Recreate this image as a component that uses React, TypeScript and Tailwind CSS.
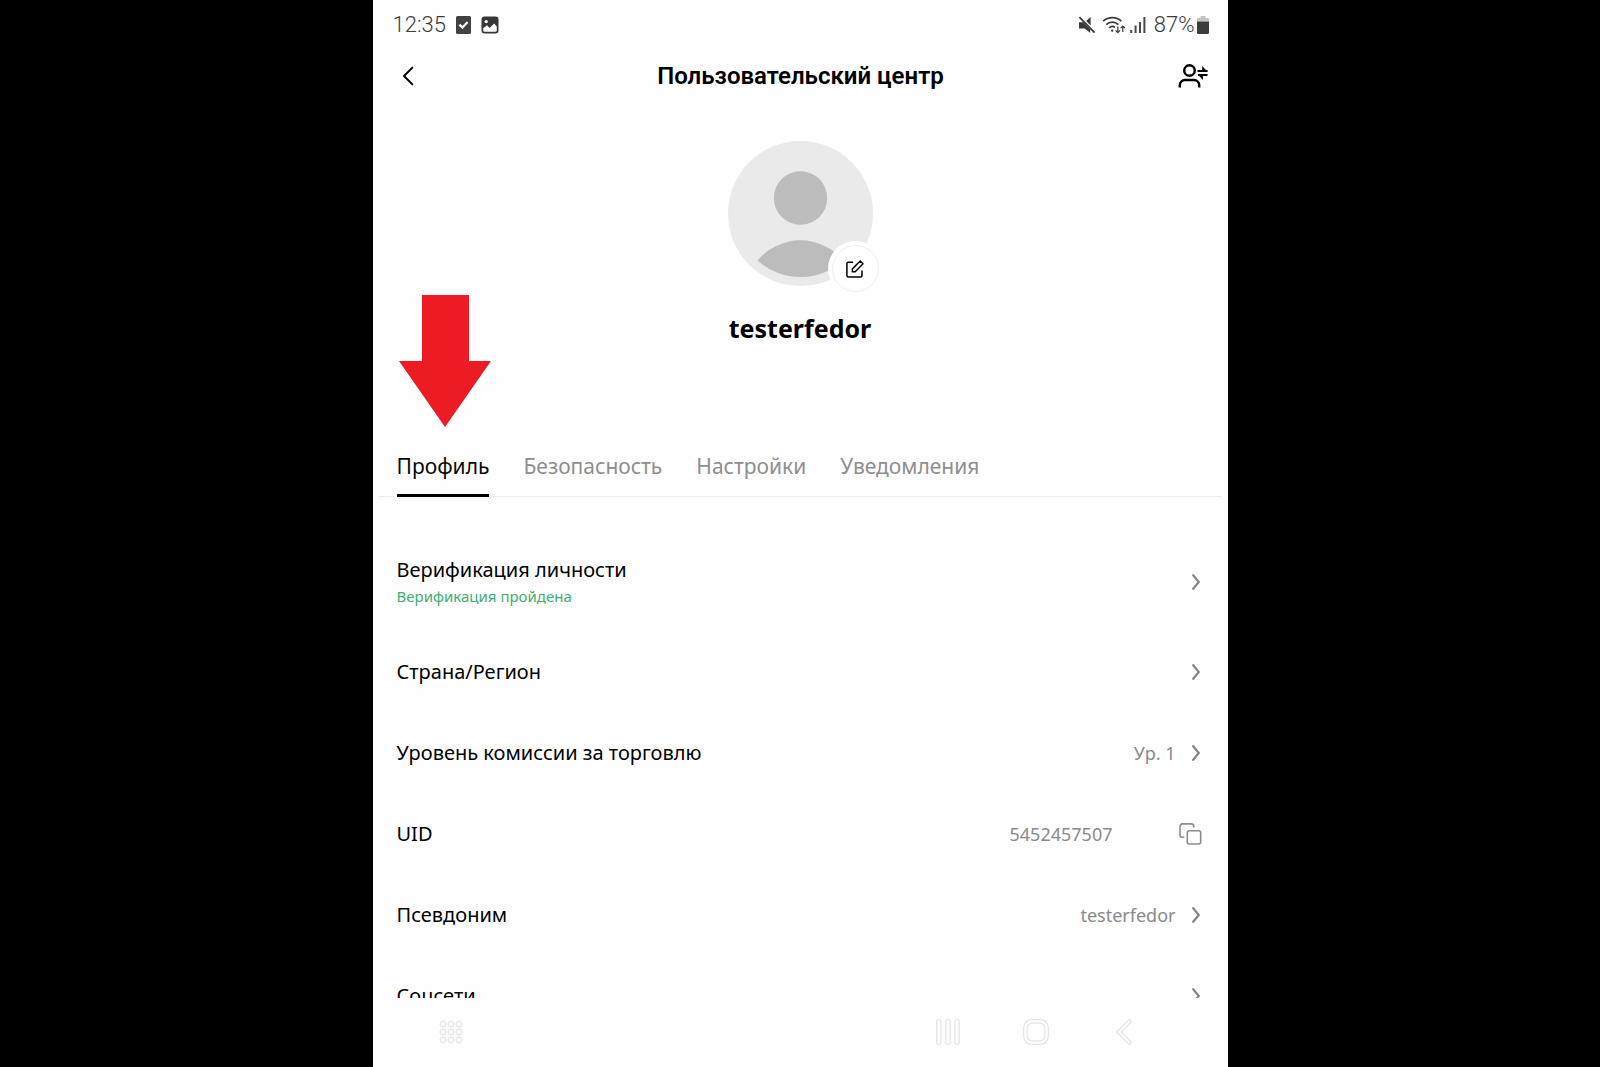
import React from "react";

const tabs = ["Профиль", "Безопасность", "Настройки", "Уведомления"];

type Row = { label: string; value?: string; copy?: boolean };

const rows: Row[] = [
  { label: "Страна/Регион" },
  { label: "Уровень комиссии за торговлю", value: "Ур. 1" },
  { label: "UID", value: "5452457507", copy: true },
  { label: "Псевдоним", value: "testerfedor" },
  { label: "Соцсети" },
];

function Chevron() {
  return (
    <svg className="mr-0.5 h-4 w-2 shrink-0" viewBox="0 0 8 16" fill="none" stroke="#858585" strokeWidth="2.2" strokeLinecap="round" aria-hidden="true">
      <path d="M1.2 1.2 6.8 8l-5.6 6.8" />
    </svg>
  );
}

function StatusBar() {
  return (
    <div className="flex h-[50px] shrink-0 items-center justify-between pl-5 pr-[19px] text-[#3a3a3a]">
      <div className="flex items-center gap-[10px]">
        <span className="text-[22px] leading-6 font-light">12:35</span>
        <div className="flex items-center gap-[10px]">
          <svg className="h-[18px] w-[15px]" viewBox="0 0 15 18" aria-hidden="true">
            <rect width="15" height="18" rx="1.5" fill="#424245" />
            <path d="m3.4 8.6 3 3L11.6 6" fill="none" stroke="#fff" strokeWidth="2.2" />
          </svg>
          <svg className="h-[18px] w-[18px]" viewBox="0 0 18 18" aria-hidden="true">
            <rect x="0.5" y="0.5" width="17" height="17" rx="3" fill="#38383b" />
            <path d="M2.2 12.2 6 9.2l2.6 2.7 4.5-4.3 2.7 3v3.6a1.6 1.6 0 0 1-1.6 1.6H3.8a1.6 1.6 0 0 1-1.6-1.6z" fill="#fff" />
            <circle cx="5.2" cy="5.6" r="1.7" fill="#fff" />
          </svg>
        </div>
      </div>
      <div className="flex items-center">
        <svg className="h-[18px] w-[18px]" viewBox="0 0 18 18" aria-hidden="true">
          <path d="M1 6.2h4.4l6.8 7.3v3.3L6.6 12.6H1z" fill="#3a3a3a" />
          <path d="M12.6 1v8.4L8.2 5.1z" fill="#3a3a3a" />
          <path d="M1.4 1.2 16.6 16.6" stroke="#3a3a3a" strokeWidth="1.8" />
        </svg>
        <svg className="ml-1.5 h-[18px] w-6" viewBox="0 0 24 18" fill="none" stroke="#3a3a3a" strokeWidth="1.7" aria-hidden="true">
          <path d="M1.2 5.2a13.5 13.5 0 0 1 18.2 0" />
          <path d="M4.2 8.6a9 9 0 0 1 12.2 0" />
          <path d="M7.2 11.8a4.8 4.8 0 0 1 5.8-.5" />
          <circle cx="10.2" cy="14.6" r="1.2" fill="#3a3a3a" stroke="none" />
          <path d="M15.8 10.6v5.8M13.6 14.4l2.2 2.2 2.2-2.2M20.8 16v-5.8M18.6 12.2l2.2-2.2 2.2 2.2" strokeWidth="1.2" />
        </svg>
        <svg className="ml-1 h-[18px] w-4" viewBox="0 0 16 18" fill="none" stroke="#4a4a4a" strokeWidth="2" aria-hidden="true">
          <path d="M1.2 17v-3M5.6 17V9.6M10 17V6M14.4 17V1" />
        </svg>
        <span className="ml-2 text-[22px] leading-6 font-light">87%</span>
        <svg className="ml-0.5 h-[18px] w-3" viewBox="0 0 12 18" aria-hidden="true">
          <path d="M3.5 0h5v2H11a1 1 0 0 1 1 1v2.6H0V3a1 1 0 0 1 1-1h2.5z" fill="#c2c2c2" />
          <path d="M0 5.6h12V16.5a1.5 1.5 0 0 1-1.5 1.5h-9A1.5 1.5 0 0 1 0 16.5z" fill="#3c3c3c" />
        </svg>
      </div>
    </div>
  );
}

function TitleBar() {
  return (
    <header className="flex h-[51px] shrink-0 items-center justify-between pl-7 pr-[19px]">
      <button type="button" aria-label="Назад" className="flex h-8 w-8 items-center">
        <svg className="h-5 w-5" viewBox="0 0 20 20" fill="none" stroke="#000" strokeWidth="2" strokeLinecap="round" strokeLinejoin="round" aria-hidden="true">
          <path d="M11.4 1.6 3 10l8.4 8.4" />
        </svg>
      </button>
      <h1 className="text-[24px] leading-7 font-semibold">Пользовательский центр</h1>
      <button type="button" aria-label="Сменить аккаунт" className="flex h-8 w-10 items-center justify-end">
        <svg className="h-6 w-[30px]" viewBox="0 0 30 24" fill="none" stroke="#000" strokeWidth="2.4" aria-hidden="true">
          <circle cx="11.5" cy="6.5" r="5.3" />
          <path d="M1.8 23.5v-2.3a5.2 5.2 0 0 1 5.200-5.200h9a5.200 5.200 0 0 1 5.200 5.200v2.300" />
          <path d="M19.500 7h10M20 11h9.500" strokeWidth="2.200" />
          <path d="M24.200 2 29.700 8h-5.500zM24.900 16 19.400 10h5.500z" fill="#000" stroke="none" />
        </svg>
      </button>
    </header>
  );
}

function Avatar() {
  return (
    <div className="relative h-[145px] w-[145px]">
      <svg className="h-full w-full" viewBox="0 0 145 145" aria-hidden="true">
        <circle cx="72.5" cy="72.5" r="72.5" fill="#eaeaea" />
        <circle cx="72.5" cy="57" r="26.7" fill="#bcbcbc" />
        <path d="M29.5 119.5a56 56 0 0 1 86 0 64 64 0 0 1-86 0z" fill="#bcbcbc" />
      </svg>
      <button
        type="button"
        aria-label="Изменить фото"
        className="absolute -right-2.5 -bottom-2.5 flex h-[55px] w-[55px] items-center justify-center rounded-full bg-[#fefefe]"
      >
        <span className="flex h-[47px] w-[47px] items-center justify-center rounded-full border border-[#efefef]">
          <svg className="h-[18px] w-[18px]" viewBox="0 0 18 18" fill="none" stroke="#000" strokeWidth="1.5" strokeLinejoin="round" strokeLinecap="round" aria-hidden="true">
            <path d="M6.6 2.2H2.4A1.5 1.5 0 0 0 .9 3.7v11.9a1.5 1.5 0 0 0 1.5 1.5h12.1a1.5 1.5 0 0 0 1.5-1.5v-4.6" />
            <path d="M14.2 1 17 3.8l-7.8 7.9H6.4V8.9z" />
          </svg>
        </span>
      </button>
    </div>
  );
}

function Tabs() {
  return (
    <nav className="relative mx-1.5 flex h-[61px] gap-[34px] border-b border-[#ececec] pl-[18px]">
      <svg className="absolute bottom-[69px] left-5 h-[132px] w-[92px]" viewBox="0 0 92 132" aria-hidden="true">
        <path d="M23 0h47v66h22l-46 66L0 66h23z" fill="#ed1c24" />
      </svg>
      {tabs.map((tab, i) => (
        <a
          key={tab}
          href="#"
          className={
            i === 0
              ? "-mb-px border-b-[3px] border-black pt-4 text-[21px] leading-7 text-[#0a0a0a]"
              : "pt-4 text-[21px] leading-7 text-[#8e8e8e]"
          }
        >
          {tab}
        </a>
      ))}
    </nav>
  );
}

function ProfileRow({ label, value, copy }: Row) {
  return (
    <li className="flex h-[81px] items-center justify-between">
      <span className="text-[20px] leading-7">{label}</span>
      <div className="flex items-center gap-4 text-[18px] leading-7 text-[#8a8a8a]">
        {value && <span className={copy ? "mr-[50px]" : ""}>{value}</span>}
        {copy ? (
          <button type="button" aria-label="Копировать UID">
            <svg className="h-[22px] w-[23px]" viewBox="0 0 23 22" fill="none" stroke="#8c8c8c" strokeWidth="1.6" strokeLinecap="round" aria-hidden="true">
              <rect x="8.3" y="7.8" width="13.4" height="13.2" rx="2" />
              <path d="M4.6 14.2H3.3A2.3 2.3 0 0 1 1 11.9V3.2A2.3 2.3 0 0 1 3.3.9h9.1a2.3 2.3 0 0 1 2.3 2.3v1.1" />
            </svg>
          </button>
        ) : (
          <Chevron />
        )}
      </div>
    </li>
  );
}

function NavBar() {
  return (
    <footer className="flex h-[69px] shrink-0 items-center justify-between pb-0.5 pl-[66px] pr-[94px]">
      <button type="button" aria-label="Приложения">
        <svg className="h-6 w-6" viewBox="0 0 24 24" fill="none" stroke="#e6e6e6" strokeWidth="1.3" aria-hidden="true">
          {[4, 12, 20].map((y) => [4, 12, 20].map((x) => <circle key={x + "-" + y} cx={x} cy={y} r="2.8" />))}
        </svg>
      </button>
      <div className="flex items-center gap-[63px]">
        <button type="button" aria-label="Недавние">
          <svg className="h-[26px] w-6" viewBox="0 0 24 26" fill="none" stroke="#e6e6e6" strokeWidth="1.3" aria-hidden="true">
            <rect x="0.7" y="0.7" width="4.3" height="24.6" rx="1.5" />
            <rect x="9.8" y="0.7" width="4.3" height="24.6" rx="1.5" />
            <rect x="18.9" y="0.7" width="4.3" height="24.6" rx="1.5" />
          </svg>
        </button>
        <button type="button" aria-label="Домой">
          <svg className="h-[26px] w-[26px]" viewBox="0 0 26 26" fill="none" stroke="#e4e4e4" strokeWidth="1.3" aria-hidden="true">
            <rect x="0.7" y="0.7" width="24.6" height="24.6" rx="8" />
            <rect x="4.2" y="4.2" width="17.6" height="17.6" rx="5" />
          </svg>
        </button>
        <button type="button" aria-label="Назад">
          <svg className="h-[26px] w-[22px]" viewBox="0 0 22 26" fill="none" stroke="#e6e6e6" strokeWidth="1.3" strokeLinejoin="round" aria-hidden="true">
            <path d="M16.4 1.2a1.5 1.5 0 0 1 2.2 2.3L9.2 13l9.4 9.5a1.5 1.5 0 0 1-2.2 2.3L4.6 13z" />
          </svg>
        </button>
      </div>
    </footer>
  );
}

export default function App() {
  return (
    <div className="flex h-screen justify-center bg-black">
      <main className="flex w-full max-w-[855px] flex-col bg-[#fefefe] font-[Roboto,sans-serif] text-black">
        <StatusBar />
        <TitleBar />
        <div className="min-h-0 flex-1 overflow-hidden font-['Noto_Sans',sans-serif]">
          <section className="flex flex-col items-center pt-10">
            <Avatar />
            <h2 className="mt-6 text-[25px] leading-9 font-bold">testerfedor</h2>
          </section>
          <div className="pt-[90px]">
            <Tabs />
          </div>
          <ul className="pt-[39px] pr-[26px] pl-6">
            <li className="mb-[3px] flex h-[92px] items-center justify-between">
              <div className="flex flex-col">
                <span className="text-[20px] leading-7">Верификация личности</span>
                <span className="text-[15px] leading-6 text-[#3fae72]">Верификация пройдена</span>
              </div>
              <Chevron />
            </li>
            {rows.map((row) => (
              <ProfileRow key={row.label} {...row} />
            ))}
          </ul>
        </div>
        <NavBar />
      </main>
    </div>
  );
}
